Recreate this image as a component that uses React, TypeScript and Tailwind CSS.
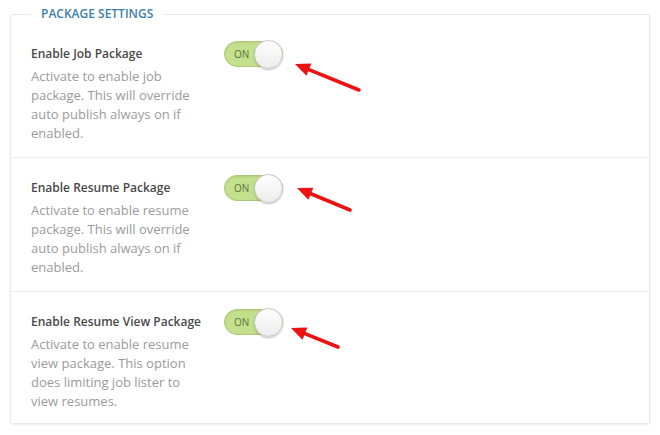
import React from "react";

type Row = { title: string; desc: string; first?: boolean; last?: boolean };

const rows: Row[] = [
  {
    title: "Enable Job Package",
    desc: "Activate to enable job package. This will override auto publish always on if enabled.",
    first: true,
  },
  {
    title: "Enable Resume Package",
    desc: "Activate to enable resume package. This will override auto publish always on if enabled.",
  },
  {
    title: "Enable Resume View Package",
    desc: "Activate to enable resume view package. This option does limiting job lister to view resumes.",
    last: true,
  },
];

function Toggle() {
  return (
    <div className="relative h-[26px] w-[59px] rounded-full border border-[#aac876] bg-[#c3e08c] shadow-[inset_0_1px_2px_rgba(0,0,0,0.08)]">
      <span className="absolute left-[9px] top-0 text-[10px] leading-[24px] text-[#5f7440]">ON</span>
      <span className="absolute right-[-1px] top-[-2.5px] h-[29px] w-[29px] rounded-full border border-[#c8c8c8] bg-gradient-to-b from-white to-[#ececec] shadow-[0_1px_2px_rgba(0,0,0,0.25)]" />
    </div>
  );
}

function Arrow({ tail, tip }: { tail: [number, number]; tip: [number, number] }) {
  const dx = tip[0] - tail[0];
  const dy = tip[1] - tail[1];
  const len = Math.hypot(dx, dy);
  const ux = dx / len;
  const uy = dy / len;
  const head = 15;
  const half = 6.5;
  const bx = tip[0] - ux * head;
  const by = tip[1] - uy * head;
  const px = -uy;
  const py = ux;
  const pts = `${tip[0]},${tip[1]} ${bx + px * half},${by + py * half} ${bx - px * half},${by - py * half}`;
  return (
    <g>
      <line x1={tail[0]} y1={tail[1]} x2={bx + ux * 2} y2={by + uy * 2} stroke="#ee1111" strokeWidth={3.6} strokeLinecap="round" />
      <polygon points={pts} fill="#ee1111" />
    </g>
  );
}

export default function App() {
  return (
    <div className="relative h-[435px] w-[660px] bg-white" style={{ fontFamily: '"Open Sans", "Noto Sans", sans-serif' }}>
      <div className="pl-[10px] pt-0">
        <fieldset className="w-[640px] rounded-[3px] border border-[#e8e8e8] shadow-[0_1px_2px_rgba(0,0,0,0.08)]">
          <legend className="ml-[20px] px-[10px] text-[12px] font-semibold uppercase leading-[28px] text-[#3d7eab]">
            Package Settings
          </legend>
          {rows.map((r, i) => (
            <div
              key={i}
              className={
                (r.first ? "pt-[16px] " : "pt-[20px] ") +
                (r.last ? "pb-[12px] " : "pb-[14px] border-b border-[#ececec] ") +
                "grid grid-cols-[193px_1fr] pl-[20px]"
              }
            >
              <div>
                <div className="text-[12px] font-semibold leading-[20px] text-[#4a4a4a]">{r.title}</div>
                <div className="mt-[3px] w-[170px] text-[13px] leading-[19px] text-[#9b9b9b]">{r.desc}</div>
              </div>
              <div className="flex h-[20px] items-center">
                <Toggle />
              </div>
            </div>
          ))}
        </fieldset>
      </div>
      <svg className="pointer-events-none absolute left-0 top-0" width={660} height={435}>
        <Arrow tail={[359, 90]} tip={[295, 64]} />
        <Arrow tail={[350, 210]} tip={[297, 188]} />
        <Arrow tail={[338, 347]} tip={[291, 328]} />
      </svg>
    </div>
  );
}
